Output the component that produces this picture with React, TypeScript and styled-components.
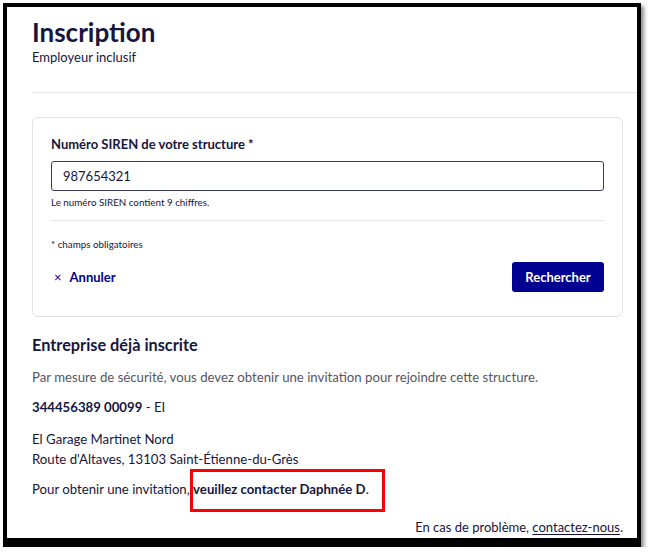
import { FC } from "react";
import styled, { createGlobalStyle } from "styled-components";

const GlobalStyle = createGlobalStyle`
  html, body {
    margin: 0;
    padding: 0;
    background: #ffffff;
  }

  body {
    font-family: Lato, "Noto Sans", sans-serif;
    color: #161640;
  }
`;

const App: FC = () => {
  return (
    <>
      <GlobalStyle />
      <Frame>
        <Header>
          <Title>Inscription</Title>
          <Subtitle>Employeur inclusif</Subtitle>
        </Header>
        <Rule />

        <Card>
          <Label htmlFor="siren">Numéro SIREN de votre structure *</Label>
          <Input id="siren" defaultValue="987654321" />
          <Hint>Le numéro SIREN contient 9 chiffres.</Hint>
          <Divider />
          <Hint>* champs obligatoires</Hint>
          <Actions>
            <CancelLink href="#">
              <span className="cross">×</span>
              Annuler
            </CancelLink>
            <PrimaryButton type="button">Rechercher</PrimaryButton>
          </Actions>
        </Card>

        <Section>
          <SectionTitle>Entreprise déjà inscrite</SectionTitle>
          <Text $muted>
            Par mesure de sécurité, vous devez obtenir une invitation pour rejoindre cette structure.
          </Text>
          <Text>
            <strong>344456389 00099</strong> - EI
          </Text>
          <Address>
            El Garage Martinet Nord
            <br />
            Route d'Altaves, 13103 Saint-Étienne-du-Grès
          </Address>
          <Text>
            Pour obtenir une invitation, <Highlight>veuillez contacter Daphnée D</Highlight>.
          </Text>
        </Section>

        <Footer>
          En cas de problème, <a href="#">contactez-nous</a>.
        </Footer>
      </Frame>
    </>
  );
};

const Frame = styled.div`
  box-sizing: border-box;
  width: 638px;
  height: 544px;
  margin: 3px 0 0 3px;
  padding: 10px 14px 0 25px;
  border: 4px solid #000;
  border-bottom-width: 9px;
  box-shadow: 3px 3px 4px rgba(0, 0, 0, 0.45);
  background: #fff;
  overflow: hidden;
`;

const Header = styled.header`
  display: flex;
  flex-direction: column;
`;

const Title = styled.h1`
  margin: 0;
  font-size: 26px;
  line-height: 30px;
  font-weight: 700;
  color: #161640;
`;

const Subtitle = styled.p`
  margin: 1px 0 0;
  font-size: 13px;
  line-height: 18px;
  color: #161640;
`;

const Rule = styled.hr`
  margin: 26px -14px 24px 0;
  border: none;
  border-top: 1px solid #e5e5e5;
`;

const Card = styled.section`
  display: flex;
  flex-direction: column;
  padding: 17px 18px 24px;
  border: 1px solid #e3e3e3;
  border-radius: 6px;
`;

const Label = styled.label`
  font-size: 13px;
  line-height: 18px;
  font-weight: 700;
  color: #161640;
  margin-bottom: 8px;
`;

const Input = styled.input`
  box-sizing: border-box;
  height: 30px;
  padding: 0 11px;
  border: 1px solid #3a3a5c;
  border-radius: 3px;
  font-family: Lato, "Noto Sans", sans-serif;
  font-size: 13px;
  color: #161640;
  outline: none;
`;

const Hint = styled.p`
  margin: 4px 0 0;
  font-size: 9.8px;
  line-height: 14px;
  color: #161640;
`;

const Divider = styled.hr`
  width: 100%;
  margin: 11px 0 12px;
  border: none;
  border-top: 1px solid #e5e5e5;
`;

const Actions = styled.div`
  display: flex;
  align-items: center;
  justify-content: space-between;
  margin-top: 11px;
`;

const CancelLink = styled.a`
  display: flex;
  align-items: center;
  gap: 8px;
  padding-left: 3px;
  font-size: 13px;
  font-weight: 700;
  color: #000091;
  text-decoration: none;

  .cross {
    font-weight: 400;
    font-size: 13px;
  }
`;

const PrimaryButton = styled.button`
  width: 92px;
  height: 30px;
  border: none;
  border-radius: 3px;
  background: #000091;
  color: #fff;
  font-family: Lato, "Noto Sans", sans-serif;
  font-size: 13px;
  font-weight: 700;
`;

const Section = styled.section`
  margin-top: 17px;
  display: flex;
  flex-direction: column;
  gap: 10px;
`;

const SectionTitle = styled.h2`
  margin: 0 0 1px;
  font-size: 16.3px;
  line-height: 22px;
  font-weight: 700;
  color: #161640;
`;

const Text = styled.p<{ $muted?: boolean }>`
  margin: 0;
  font-size: 13.2px;
  line-height: 20px;
  color: ${(props) => (props.$muted ? "#555566" : "#161640")};

  strong {
    font-weight: 700;
  }
`;

const Address = styled(Text)`
  margin-top: 2px;
`;

const Highlight = styled.strong`
  position: relative;
  font-weight: 700;

  &::after {
    content: "";
    position: absolute;
    top: -12px;
    bottom: -15px;
    left: -3px;
    right: -19px;
    border: 3px solid #ff0000;
  }
`;

const Footer = styled.p`
  margin: 19px 0 0;
  text-align: right;
  font-size: 13px;
  line-height: 18px;
  color: #161640;

  a {
    color: #161640;
    text-decoration: underline;
    text-underline-offset: 2px;
  }
`;

export default App;
